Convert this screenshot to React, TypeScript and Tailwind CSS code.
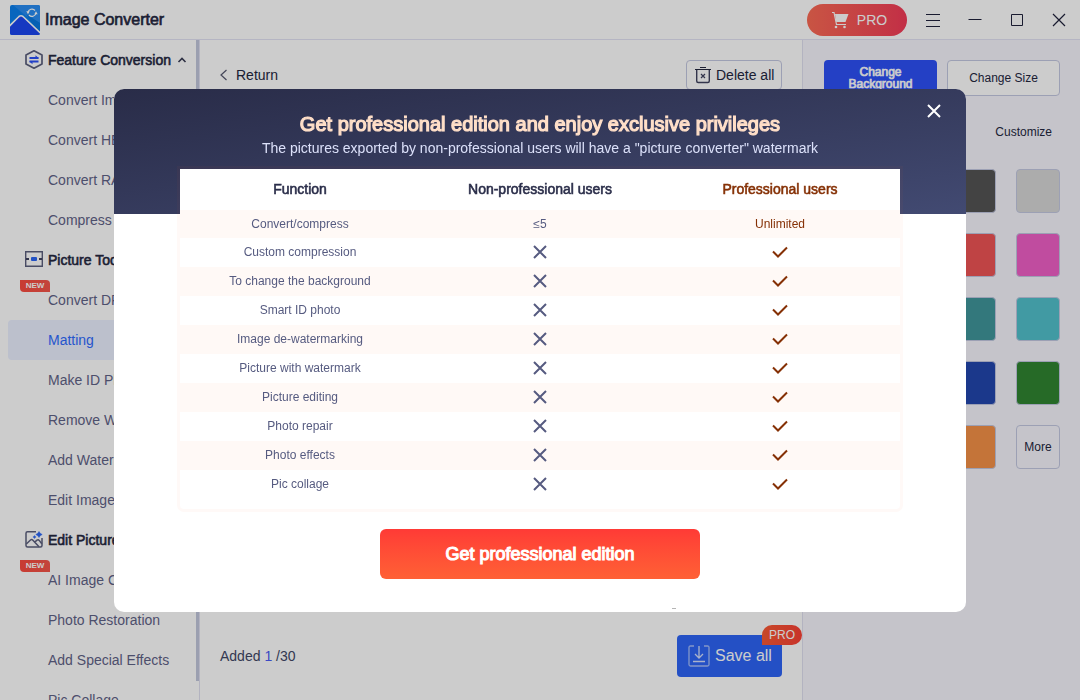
import React, { useState } from 'react';
import clsx from 'clsx';

interface MenuEntry {
  label: string;
  isNew?: boolean;
}

interface MenuGroup {
  title: string;
  icon: React.ReactNode;
  items: MenuEntry[];
}

const menu: MenuGroup[] = [
  {
    title: 'Feature Conversion',
    icon: <ConversionIcon />,
    items: [
      { label: 'Convert Image' },
      { label: 'Convert HEIC' },
      { label: 'Convert RAW' },
      { label: 'Compress' },
    ],
  },
  {
    title: 'Picture Tools',
    icon: <ToolsIcon />,
    items: [
      { label: 'Convert DPI', isNew: true },
      { label: 'Matting' },
      { label: 'Make ID Photo' },
      { label: 'Remove Watermark' },
      { label: 'Add Watermark' },
      { label: 'Edit Image' },
    ],
  },
  {
    title: 'Edit Picture',
    icon: <EditIcon />,
    items: [
      { label: 'AI Image Coloring', isNew: true },
      { label: 'Photo Restoration' },
      { label: 'Add Special Effects' },
      { label: 'Pic Collage' },
    ],
  },
];

const swatches = [
  'bg-white', 'bg-black', 'bg-[#545454]', 'bg-[#d8d8d8]',
  'bg-[#8c52ff]', 'bg-[#c9302c]', 'bg-[#ef5456]', 'bg-[#f05fc7]',
  'bg-[#5e17eb]', 'bg-[#a66bd3]', 'bg-[#40979b]', 'bg-[#52c1cc]',
  'bg-[#5271ff]', 'bg-[#38b6ff]', 'bg-[#2246ae]', 'bg-[#308531]',
  'bg-[#7ed957]', 'bg-[#ffde59]', 'bg-[#f59148]',
];

const features = [
  'Custom compression',
  'To change the background',
  'Smart ID photo',
  'Image de-watermarking',
  'Picture with watermark',
  'Picture editing',
  'Photo repair',
  'Photo effects',
  'Pic collage',
];

export default function App() {
  const [active, setActive] = useState('Matting');
  const [showModal, setShowModal] = useState(true);

  return (
    <div className="h-screen flex flex-col overflow-hidden bg-white font-['Liberation_Sans',Arial,sans-serif] text-sm text-[#24273f]">
      <TitleBar />

      <div className="flex flex-1 min-h-0">
        <Sidebar active={active} onSelect={setActive} />

        {/* Work area */}
        <main className="flex-1 min-w-0 flex flex-col justify-between px-5 pt-5 pb-[23px]">
          <div className="flex items-center justify-between">
            <button className="flex items-center gap-2">
              <svg className="w-2 h-3" viewBox="0 0 8 12" fill="none" stroke="#55586f" strokeWidth="1.2">
                <path d="M6.5 1 1 6l5.5 5" />
              </svg>
              Return
            </button>
            <button className="flex items-center h-[30px] w-24 pl-2 gap-[5px] border border-[#c4c8e1] rounded-sm">
              <TrashIcon />
              Delete all
            </button>
          </div>

          <div className="flex items-center justify-between">
            <span className="text-[#414766]">
              Added <span className="text-[#4a5cf5]">1</span> /30
            </span>
            <button className="relative flex items-center w-[105px] h-[42px] pl-[11px] gap-[5px] rounded bg-[#2d65f7] text-white text-base">
              <SaveIcon />
              Save all
              <span className="absolute -top-[10px] -right-5 w-10 h-5 rounded-full rounded-bl-none bg-linear-to-r from-[#fa5a34] to-[#fa4035] text-xs leading-5 text-center">
                PRO
              </span>
            </button>
          </div>
        </main>

        {/* Background settings */}
        <aside className="w-[278px] shrink-0 border-l border-[#e0e0f0] bg-[#f7f6fd] px-5 pt-5 text-xs">
          <div className="grid grid-cols-2 gap-[10px] ml-[1px]">
            <button className="h-9 rounded bg-[#2d51f7] text-white leading-3 px-5 [-webkit-text-stroke:0.06em]">
              Change Background
            </button>
            <button className="h-9 rounded border border-[#c4c8e1] bg-white">Change Size</button>
          </div>
          <div className="flex justify-between mt-7 mb-[29px] px-2 leading-4">
            <button>Default</button>
            <button>Customize</button>
          </div>
          <div className="grid grid-cols-4 gap-5 ml-[1px]">
            {swatches.map(color => (
              <button key={color} aria-label="Background colour" className={clsx('h-11 rounded border border-[#c4c8e1]', color)} />
            ))}
            <button className="h-11 rounded border border-[#c4c8e1]">More</button>
          </div>
        </aside>
      </div>

      {showModal && <UpgradeModal onClose={() => setShowModal(false)} />}
    </div>
  );
}

function TitleBar() {
  return (
    <header className="h-10 shrink-0 flex items-center justify-between pl-[10px] pr-[13px] border-b border-[#e3e3f4]">
      <div className="flex items-center gap-[5px]">
        <Logo />
        <h1 className="text-base leading-5 [-webkit-text-stroke:0.04em]">Image Converter</h1>
      </div>
      <div className="flex items-center">
        <button className="flex items-center justify-center w-[100px] h-8 mr-[18px] pl-1 gap-2 rounded-full bg-linear-to-r from-[#fb6a54] to-[#f33a58] text-white">
          <CartIcon />
          PRO
        </button>
        <div className="flex items-center gap-[26px]">
          <button aria-label="Menu">
            <svg className="w-4 h-4" viewBox="0 0 16 16" stroke="#20223c">
              <path d="M1 2.500h14M1 8.500h14M1 14.500h14" />
            </svg>
          </button>
          <button aria-label="Minimize">
            <svg className="w-4 h-4" viewBox="0 0 16 16" stroke="#20223c">
              <path d="M1.500 7.500h13" />
            </svg>
          </button>
          <button aria-label="Maximize">
            <svg className="w-4 h-4" viewBox="0 0 16 16" fill="none" stroke="#20223c">
              <path d="M2.500 2.500h11v11h-11z" />
            </svg>
          </button>
          <button aria-label="Close">
            <svg className="w-4 h-4" viewBox="0 0 16 16" stroke="#20223c" strokeWidth="1.2">
              <path d="m2 2 12 12M14 2 2 14" />
            </svg>
          </button>
        </div>
      </div>
    </header>
  );
}

interface SidebarProps {
  active: string;
  onSelect: (label: string) => void;
}

function Sidebar({ active, onSelect }: SidebarProps) {
  return (
    <nav className="w-[200px] shrink-0 flex overflow-hidden border-r border-[#e0e0f0]">
      <div className="flex-1 pl-2">
        {menu.map((group, i) => (
          <section key={group.title}>
            <h2 className="flex items-center h-10 pl-4 gap-1 whitespace-nowrap">
              {group.icon}
              <span className="[-webkit-text-stroke:0.04em]">{group.title}</span>
              {i === 0 && (
                <svg className="w-3 h-2 ml-[1px]" viewBox="0 0 12 8" fill="none" stroke="#3a3d55" strokeWidth="1.6">
                  <path d="M2.500 6 6 2.500 9.500 6" />
                </svg>
              )}
            </h2>
            {group.items.map(item => (
              <button
                key={item.label}
                onClick={() => onSelect(item.label)}
                className={clsx(
                  'relative block w-full h-10 pl-10 rounded text-left whitespace-nowrap',
                  item.label === active ? 'bg-[#ebf0ff] text-[#2f6bff]' : 'text-[#5f6388]'
                )}
              >
                {item.isNew && (
                  <span className="absolute left-3 top-0 w-[30px] h-3 rounded-sm rounded-tl-none rounded-br-none bg-linear-to-r from-[#fa4b40] to-[#f5564a] text-white text-[8px] leading-3 font-bold text-center">
                    NEW
                  </span>
                )}
                {item.label}
              </button>
            ))}
          </section>
        ))}
      </div>
      <div className="w-[3px] h-[641px] bg-[#c2c7dc]" />
    </nav>
  );
}

function UpgradeModal({ onClose }: { onClose: () => void }) {
  return (
    <div className="fixed inset-0 flex items-center justify-center bg-black/20">
      <div role="dialog" aria-label="Professional edition" className="relative w-full max-w-[852px] pb-[33px] rounded-[10px] overflow-hidden bg-white flex flex-col items-center">
        <div className="absolute inset-x-0 top-0 h-[125px] bg-linear-to-br from-[#292c48] to-[#424a72]" />
        <button onClick={onClose} aria-label="Close dialog" className="absolute top-[14px] right-6">
          <svg className="w-4 h-4" viewBox="0 0 16 16" stroke="#fff" strokeWidth="2">
            <path d="m2 2 12 12M14 2 2 14" />
          </svg>
        </button>

        <div className="relative pt-[21px] pb-[11px] text-center">
          <h2 className="text-xl leading-7 text-[#ffdfc8] [-webkit-text-stroke:0.06em]">
            Get professional edition and enjoy exclusive privileges
          </h2>
          <p className="leading-5 text-[#dce1fa]">
            The pictures exported by non-professional users will have a "picture converter" watermark
          </p>
        </div>

        <div className="relative w-full max-w-[720px] pb-[10px] bg-white rounded-b shadow-[0_0_0_3px_rgba(255,104,48,0.04)]">
          <table className="w-full table-fixed text-center text-xs text-[#565b80]">
            <thead>
              <tr className="h-[41px] text-sm text-[#2a2d49] [-webkit-text-stroke:0.04em]">
                <th className="font-normal">Function</th>
                <th className="font-normal">Non-professional users</th>
                <th className="font-normal text-[#853005]">Professional users</th>
              </tr>
            </thead>
            <tbody>
              <tr className="h-7 bg-[#fff9f6]">
                <td>Convert/compress</td>
                <td>≤5</td>
                <td className="text-[#853005]">Unlimited</td>
              </tr>
              {features.map(name => (
                <tr key={name} className="h-[29px] even:bg-white odd:bg-[#fff9f6]">
                  <td>{name}</td>
                  <td>
                    <svg className="w-4 h-4 mx-auto" viewBox="0 0 16 16" stroke="#565b80" strokeWidth="2" role="img" aria-label="Not included">
                      <path d="m2 2 12 12M14 2 2 14" />
                    </svg>
                  </td>
                  <td>
                    <svg className="w-4 h-4 mx-auto" viewBox="0 0 16 16" fill="none" stroke="#853005" strokeWidth="2" role="img" aria-label="Included">
                      <path d="m1 7.500 5 5 9-9" />
                    </svg>
                  </td>
                </tr>
              ))}
            </tbody>
          </table>
        </div>

        <button className="w-80 h-[50px] mt-5 rounded-md bg-linear-to-b from-[#ff3a36] to-[#ff6035] text-white text-lg [-webkit-text-stroke:0.06em]">
          Get professional edition
        </button>
        <div className="absolute bottom-[3px] right-[290px] w-1 h-px bg-[#b5b5b5]" />
      </div>
    </div>
  );
}

function Logo() {
  return (
    <svg className="w-[30px] h-[30px]" viewBox="0 0 30 30" fill="none">
      <clipPath id="logo-clip">
        <rect width="30" height="30" rx="2" />
      </clipPath>
      <g clipPath="url(#logo-clip)">
        <path d="M0 0h30v30H0z" fill="#0a80ee" />
        <path d="M3 0h27v18L16 11z" fill="#288df3" />
        <path d="M16 9 30 18v12z" fill="#0878e0" />
        <path d="M-1 21.500 9 11.500q2-1.500 4 0l18 17v3H-1z" fill="#1c46f2" />
        <path d="M-1 21.500 9 11.500q2-1.500 4 0l18 17" stroke="#fff" strokeWidth="1.6" />
      </g>
      <path d="M18 7.500a4 4 0 0 1 7-2M26 8a4 4 0 0 1-7 2" stroke="#fff" strokeWidth="1.2" />
      <path d="M16.300 6.300h3.400L18 9.200zM24.300 9.200h3.400L26 6.300z" fill="#fff" />
    </svg>
  );
}

function CartIcon() {
  return (
    <svg className="w-[18px] h-[18px]" viewBox="0 0 18 18" fill="none">
      <path d="M1 1.500h2l2.500 12H15" stroke="#fff" strokeWidth="1.2" />
      <path d="M4 3h13.500l-3 8H5.200z" fill="#fff" />
      <circle cx="5" cy="16" r="1.3" fill="#fff" />
      <circle cx="13.5" cy="16" r="1.3" fill="#fff" />
    </svg>
  );
}

function ConversionIcon() {
  return (
    <svg className="w-5 h-5" viewBox="0 0 20 20" fill="none">
      <path d="M10 .800 18 5v9l-8 4.200L2 14V5z" stroke="#5c607e" strokeWidth="1.7" strokeLinejoin="round" />
      <path d="M5.500 8h9M5.500 11.500h9" stroke="#2b50fa" strokeWidth="1.8" />
      <path d="M11.500 5.200v3h3.400zM8.500 14.300v-3H5.100z" fill="#2b50fa" />
    </svg>
  );
}

function ToolsIcon() {
  return (
    <svg className="w-5 h-5" viewBox="0 0 20 20" fill="none">
      <path d="M1.700 1.700h16.600v14.600H1.700z" stroke="#5c607e" strokeWidth="1.4" />
      <path d="M2 9h3M15 9h3" stroke="#40435f" strokeWidth="2" />
      <rect x="7" y="7" width="6" height="4" rx="1" fill="#2b66f6" />
    </svg>
  );
}

function EditIcon() {
  return (
    <svg className="w-5 h-5" viewBox="0 0 20 20" fill="none">
      <path d="M12 1.700H3.500Q2 1.700 2 3.200v12.300Q2 17 3.500 17h13q1.500 0 1.500-1.500V8" stroke="#5c607e" strokeWidth="1.5" />
      <path d="m2.300 14 4.200-4q1.200-1 2.400.200L15 16.800M11 11.800l2-1.600q1.200-1 2.200.200l2.600 3.400" stroke="#5c607e" strokeWidth="1.5" />
      <path d="m15 1.500 1.200 1.800 2 1.200-2 1.200L15 7.500l-1.200-1.800-2-1.200 2-1.200zM10.500 5.500l.600.900 1 .600-1 .600-.600.900-.600-.900-1-.600 1-.600z" fill="#2b66f6" stroke="#2b66f6" strokeWidth=".5" />
    </svg>
  );
}

function TrashIcon() {
  return (
    <svg className="w-4 h-[18px]" viewBox="0 0 16 18" fill="none" stroke="#40435f">
      <path d="M0 3.500h16M5 1.500h6" stroke="#24273f" />
      <path d="M1.700 4v11q0 1.500 1.500 1.500h9.600q1.500 0 1.500-1.500V4" strokeWidth="1.4" />
      <path d="m6 8 4 4M10 8l-4 4" strokeWidth="1.2" />
    </svg>
  );
}

function SaveIcon() {
  return (
    <svg className="w-[22px] h-[22px]" viewBox="0 0 22 22" fill="none" stroke="#a5bdfb" strokeWidth="1.3">
      <path d="M6 1H2.500Q1 1 1 2.500v17Q1 21 2.500 21h17q1.500 0 1.500-1.500v-17Q21 1 19.500 1H16" />
      <path d="M11 1v12M7 9l4 4 4-4M5 16.500h12" stroke="#d5dffd" />
    </svg>
  );
}
